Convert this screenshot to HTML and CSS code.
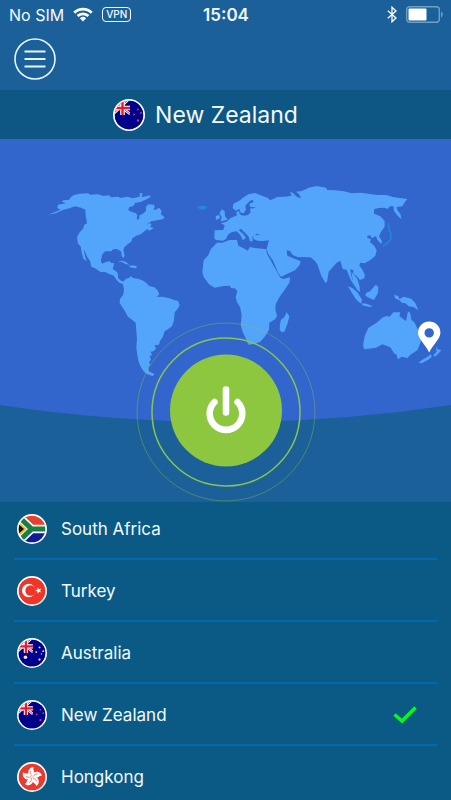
FILE: index.html
```html
<!DOCTYPE html>
<html lang="en">
<head>
<meta charset="utf-8">
<meta name="viewport" content="width=device-width, initial-scale=1">
<title>VPN</title>
<link rel="stylesheet" href="styles.css">
</head>
<body>
<svg class="defs" aria-hidden="true">
  <defs>
    <clipPath id="disc"><circle cx="16" cy="16" r="14.2"/></clipPath>
    <g id="jack">
      <path fill="#00008b" d="M0 0h32v32H0z"/>
      <path stroke="#fff" stroke-width="2.600" d="M-2 0 17 15M17-1-1 16"/>
      <path stroke="#e8232f" stroke-width="1" d="M-2 0 17 15M17-1-1 16"/>
      <path stroke="#fff" stroke-width="4.600" d="M9.500 0v16M0 9h17"/>
      <path stroke="#f0142d" stroke-width="2.400" d="M9.500 0v16M0 9h17"/>
      <path fill="#00008b" d="M17 0h15v32H0V16.500h17z"/>
    </g>
    <symbol id="nz" viewBox="0 0 32 32">
      <circle cx="16" cy="16" r="16" fill="#fff"/>
      <g clip-path="url(#disc)"><use href="#jack"/>
        <g fill="#c23a66"><circle cx="25" cy="10.500" r="1"/><circle cx="21" cy="15.500" r="1"/><circle cx="28" cy="14" r="1"/><circle cx="25" cy="21.500" r="1.200"/></g>
      </g>
    </symbol>
    <symbol id="au" viewBox="0 0 32 32">
      <circle cx="16" cy="16" r="16" fill="#fff"/>
      <g clip-path="url(#disc)"><use href="#jack"/>
        <g fill="#e8e8ff"><circle cx="9" cy="20.500" r="1.900"/><circle cx="24" cy="10" r="1"/><circle cx="20.500" cy="15" r="1"/><circle cx="28" cy="14" r="1"/><circle cx="26" cy="17" r=".7"/><circle cx="24" cy="23" r="1.200"/></g>
      </g>
    </symbol>
    <symbol id="tr" viewBox="0 0 32 32">
      <circle cx="16" cy="16" r="16" fill="#fff"/>
      <circle cx="16" cy="16" r="14.200" fill="#ee3528"/>
      <circle cx="12.500" cy="15.500" r="7.200" fill="#fff"/>
      <circle cx="14.500" cy="15.500" r="5.600" fill="#ee3528"/>
      <path fill="#fff" d="m19.500 15.500 2.400-.9.100-2.500 1.600 2 2.400-.7-1.400 2.100 1.400 2.100-2.400-.7-1.600 2-.1-2.500z"/>
    </symbol>
    <symbol id="za" viewBox="0 0 32 32">
      <circle cx="16" cy="16" r="16" fill="#fff"/>
      <g clip-path="url(#disc)">
        <path fill="#e8412f" d="M0 0h32v12H16L3 2z"/>
        <path fill="#0c1c9b" d="M3 30l13-10h16v12H0z"/>
        <path fill="none" stroke="#fff" stroke-width="9" d="M1 2 15.500 16 1 30M15 16h18"/>
        <path fill="none" stroke="#168045" stroke-width="5.500" d="M1 2 15.500 16 1 30M15 16h18"/>
        <path fill="#f5b531" d="M0 6.500 10.500 16 0 25.500z"/>
        <path fill="#111" d="M0 9.500 7.500 16 0 22.500z"/>
      </g>
    </symbol>
    <symbol id="hk" viewBox="0 0 32 32">
      <circle cx="16" cy="16" r="16" fill="#fff"/>
      <circle cx="16" cy="16" r="14.200" fill="#e93a30"/>
      <g transform="translate(-3.200 -3.200) scale(1.2)">
        <g fill="#fff">
          <path id="petal" d="M16 16c-3.500-1.300-4.200-4.600-2.400-7 1.100-1.500 2.700-1.900 4.100-1.600-1.200 1.400.2 2.600.2 4.600 0 1.800-1.200 2.600-1.900 4z"/>
          <use href="#petal" transform="rotate(72 16 16)"/><use href="#petal" transform="rotate(144 16 16)"/><use href="#petal" transform="rotate(216 16 16)"/><use href="#petal" transform="rotate(288 16 16)"/>
        </g>
        <g stroke="#e93a30" stroke-width=".5" fill="none">
          <path id="vein" d="M16 15c-1.500-1.500-1.600-3-.9-4.500"/>
          <use href="#vein" transform="rotate(72 16 16)"/><use href="#vein" transform="rotate(144 16 16)"/><use href="#vein" transform="rotate(216 16 16)"/><use href="#vein" transform="rotate(288 16 16)"/>
        </g>
      </g>
    </symbol>
  </defs>
</svg>

<div class="app">
  <div class="status">
    <div class="status-left">
      <span>No SIM</span>
      <svg class="wifi" viewBox="0 0 20 15" aria-hidden="true">
        <path fill="none" stroke="#fff" stroke-width="2.800" d="M1.300 5.700a12.400 12.400 0 0 1 17.400 0M4.600 9.100a7.700 7.700 0 0 1 10.800 0"/>
        <path fill="#fff" d="M10 14.500 6.900 11.300a4.500 4.500 0 0 1 6.200 0z"/>
      </svg>
      <span class="vpn">VPN</span>
    </div>
    <time class="clock">15:04</time>
    <div class="status-right">
      <svg class="bluetooth" viewBox="0 0 10 17" aria-hidden="true"><path fill="none" stroke="#fff" stroke-width="1.300" d="m.8 4.800 8.200 7.300-4 3.700V1.200l4 3.700-8.200 7.300"/></svg>
      <svg class="battery" viewBox="0 0 37 17" aria-hidden="true">
        <rect x=".7" y=".7" width="32.600" height="15.600" rx="3" fill="none" stroke="#6f9fc8" stroke-width="1.400"/>
        <rect x="2.500" y="2.500" width="18" height="12" rx="1" fill="#fff"/>
        <path fill="#6f9fc8" d="M35 5.500c2.300 1 2.300 5 0 6z"/>
      </svg>
    </div>
  </div>

  <header class="toolbar">
    <button class="menu" type="button" aria-label="Menu">
      <svg viewBox="0 0 42 42" aria-hidden="true"><g fill="none" stroke="#e6f5ff"><circle cx="21" cy="21" r="20" stroke-width="1.600"/><path stroke-width="2" d="M10.500 13.500h21M10.500 21h21M10.500 28.500h21"/></g></svg>
    </button>
  </header>

  <h1 class="current"><svg class="flag-large" aria-hidden="true"><use href="#nz"/></svg>New Zealand</h1>

  <main class="stage">
    <svg class="map" viewBox="0 139 451 363" aria-hidden="true">
      <path fill="#3366cc" d="M0 139h451v266Q225.500 439 0 405z"/>
      <g fill="#52a5fa">
        <!-- North and Central America -->
        <g transform="translate(40 175) scale(.33333)">
          <path d="M26 119 45 111 62 104 52 99 54 89 78 85 66 80 70 76 88 74 92 67 102 60 120 56 145 55 150 59 175 58 190 63 207 61 213 67 236 65 240 69 262 65 278 70 292 67 300 64 299 54 308 55 305 66 318 64 330 61 332 65 322 72 309 77 302 81 286 83 280 93 267 97 265 106 276 111 288 115 292 121 290 133 297 133 299 121 311 115 318 107 318 95 325 88 342 89 344 96 340 104 347 104 358 98 365 109 362 117 374 127 368 133 351 136 334 139 318 150 331 144 334 150 330 156 342 159 328 167 322 162 311 170 302 178 287 183 276 191 275 199 263 208 253 217 250 224 254 242 250 249 245 243 244 230 238 226 228 221 217 224 215 229 196 229 187 238 183 254 184 271 193 279 203 277 210 266 222 263 221 273 216 286 231 290 234 309 244 318 257 320 250 327 239 323 230 315 224 302 207 297 194 290 183 292 165 280 154 275 150 257 142 247 133 226 131 224 136 246 140 259 130 251 125 233 122 214 114 206 111 187 118 173 129 161 133 149 141 145 137 122 136 104 123 98 105 94 88 100 68 105 47 115z"/>
          <path d="m232 259 14-2 12 4 10 8-12-2-10-6zM267 272l14-1 11 4-5 5-17-3z"/>
        </g>
        <!-- South America -->
        <g transform="translate(100 260) scale(.33333)">
          <path d="M0 0 6 11 18 6 28 4 38 12 36 24 45 32 53 39 53 53 63 66 69 67 77 57 88 53 92 48 99 54 117 57 131 63 140 70 147 78 163 82 173 91 178 103 170 111 187 110 205 114 222 120 234 123 239 135 232 148 224 157 222 181 216 199 206 206 194 214 188 232 180 243 177 254 164 256 168 266 161 274 152 275 156 285 149 289 153 300 147 306 150 315 144 324 147 334 164 343 158 348 142 343 132 335 123 322 116 305 112 285 109 264 111 236 107 188 97 180 84 170 73 151 59 129 60 116 70 104 72 86 68 70 60 69 48 57 39 44 24 35 7 32 0 36z"/>
        </g>
        <!-- Africa and Madagascar -->
        <g transform="translate(195 235) scale(.33333)">
          <path d="M66 23 82 23 103 15 126 15 130 32 146 40 158 47 165 36 179 39 202 41 214 43 215 54 230 82 239 98 256 128 265 132 286 127 283 143 269 164 253 187 242 208 241 223 246 243 240 253 223 263 222 284 211 303 196 320 181 326 160 329 152 310 143 291 137 270 140 242 136 218 126 201 122 187 127 168 119 160 109 160 104 152 85 153 59 158 42 148 26 126 22 112 26 76 40 61 47 43z"/>
          <path d="m275 232 8 12-5 21-10 25-9 1-5-8 1-16 3-13 10-7z"/>
        </g>
        <!-- Europe, Asia and Arabia -->
        <g transform="translate(190 175) scale(.33333)">
          <path d="M74 166 100 165 104 151 92 145 110 140 121 130 141 121 139 111 147 108 149 118 160 122 174 120 182 112 180 101 199 98 180 95 178 87 191 80 188 75 180 77 166 92 168 104 161 115 152 113 148 102 137 107 128 99 130 86 148 77 159 68 175 58 195 54 210 60 232 68 241 76 262 66 285 65 305 62 300 50 309 54 322 67 334 69 326 56 318 50 336 48 356 38 380 33 408 38 412 45 435 46 462 49 485 55 513 53 540 57 562 60 588 60 612 67 652 72 645 80 637 94 620 96 622 104 632 119 634 133 621 120 612 108 610 93 600 94 592 102 584 98 566 99 552 103 552 116 570 123 584 138 584 155 573 170 567 184 576 199 573 207 562 194 558 183 545 190 542 181 532 183 532 189 543 193 540 201 553 213 560 226 556 242 541 255 524 265 511 263 508 272 516 282 525 300 523 310 510 315 500 303 490 298 490 286 481 283 483 300 488 315 497 325 494 332 484 318 477 302 470 284 458 282 451 257 440 263 427 278 416 290 411 321 406 323 394 302 382 268 374 257 362 247 322 246 308 240 300 228 290 226 292 242 310 250 332 259 329 270 315 286 273 305 264 293 250 259 234 235 230 221 237 196 220 198 203 197 190 192 190 181 212 180 201 176 187 185 188 199 180 199 176 185 165 173 153 161 146 165 160 178 168 188 159 196 150 179 140 169 126 171 115 178 108 192 99 197 78 195 73 190z"/>
          <path d="m96 103 8 6 1 14 8 11-21 5 3-14-7-10zM77 123l11-3 2 9-12 6z"/>
        </g>
        <!-- Indonesia, New Guinea, Australia and New Zealand -->
        <g transform="translate(320 260) scale(.33333)">
          <path d="m94 35 9 11 9 10 7 25 1 15-9-7-9-16-5-19zM84 79l13 5 15 13 14 22-3 12-14-12-15-23zM126 130l14 1 18 8-8 2-23-5zM139 98l11-4 17-20 8 7-1 18-12 21-14-6-12-7zM223 104l11 4 5 9 12-7 22 6 13 13 9 22-15-10-14-2-9-9-12-2-6-7-14-6z"/>
          <path d="m145 204 25-16 17-15 12-5 10 2 11-13 21 0-3 12 20 14 6-29 7 6 3 19 10 9 10 22 9 13-1 24-10 24-22 14-7 9-29-6-13-10-10-16-24-9-19 10-35 5-4-11 5-28zM230 287l16-5-2 9-10 7zM348 258l5 10 11 2-9 11-10 9-5-4 10-11zM333 283l-11 8-16 9-10 8 9 2 20-11 10-8z"/>
        </g>
      </g>
      <!-- Iceland and Japan -->
      <path fill="#2888df" d="m198 206.500 5-.8 4 .8-2 3-5-.3-2-1.200z"/>
      <path fill="none" stroke="#2484dc" stroke-width="1.800" stroke-linejoin="round" d="m388.300 223 .7 7 2 4-.5 6-3 3-4.500 3"/>
      <path fill="#fff" fill-rule="evenodd" d="M429.200 352.500c-4-8.500-11.200-13-11.200-19.900a11.200 11.200 0 0 1 22.400 0c0 6.900-7.200 11.400-11.200 19.900zM429.200 328.200a4.700 4.700 0 1 0 0 9.400 4.700 4.700 0 0 0 0-9.400z"/>
    </svg>
    <button class="power" type="button" aria-label="Disconnect">
      <svg viewBox="0 0 180 180" aria-hidden="true">
        <circle cx="90" cy="90" r="89" fill="none" stroke="#8dc63f" stroke-opacity=".4"/>
        <circle cx="90" cy="90" r="74" fill="none" stroke="#86c552" stroke-width="1.500"/>
        <circle cx="90" cy="88.500" r="56" fill="#8dc63f"/>
        <g fill="none" stroke="#fff" stroke-width="6.600" stroke-linecap="round"><path d="M90 67.500v23"/><path d="M78.500 80a16.300 16.300 0 1 0 23 0"/></g>
      </svg>
    </button>
  </main>

  <ul class="countries">
    <li><button type="button"><svg class="flag" aria-hidden="true"><use href="#za"/></svg><span>South Africa</span></button></li>
    <li><button type="button"><svg class="flag" aria-hidden="true"><use href="#tr"/></svg><span>Turkey</span></button></li>
    <li><button type="button"><svg class="flag" aria-hidden="true"><use href="#au"/></svg><span>Australia</span></button></li>
    <li><button type="button" aria-pressed="true"><svg class="flag" aria-hidden="true"><use href="#nz"/></svg><span>New Zealand</span><svg class="check" viewBox="0 0 24 18" aria-hidden="true"><path fill="none" stroke="#0bf51e" stroke-width="3.500" d="m1.500 8.500 7.500 6.500L22.500 1.500"/></svg></button></li>
    <li><button type="button"><svg class="flag" aria-hidden="true"><use href="#hk"/></svg><span>Hongkong</span></button></li>
  </ul>
</div>
</body>
</html>
```
FILE: styles.css
```css
* { box-sizing: border-box; }

body {
  margin: 0;
  background: #0a5a85;
  color: #f2faff;
  font-family: Inter, "Liberation Sans", sans-serif;
}

svg { display: block; }

.defs { position: absolute; width: 0; height: 0; }

button {
  padding: 0;
  border: 0;
  background: none;
  color: inherit;
  font: inherit;
  cursor: pointer;
}

.app {
  display: flex;
  flex-direction: column;
  height: 100vh;
  background: #1b6099;
}

.app > * { flex-shrink: 0; }

.status {
  display: grid;
  grid-template-columns: 1fr auto 1fr;
  align-items: center;
  height: 30px;
  padding: 0 8px 1px 9px;
  font-size: 16px;
}

.status-left,
.status-right {
  display: flex;
  align-items: center;
  gap: 9px;
}

.status-right { justify-content: flex-end; }

.clock { font-size: 17px; font-weight: 600; }

.wifi { width: 20px; height: 15px; }

.vpn {
  padding: 0 3px;
  border: 1px solid #fff;
  border-radius: 4px;
  font-size: 10px;
  font-weight: 500;
  line-height: 13px;
}

.bluetooth { width: 10px; height: 17px; }
.battery { width: 37px; height: 17px; }

.toolbar {
  height: 60px;
  padding: 8px 14px;
}

.menu, .menu svg { display: block; width: 42px; height: 42px; }

.current {
  display: flex;
  align-items: center;
  justify-content: center;
  gap: 10px;
  height: 49px;
  margin: 0;
  padding-right: 40px;
  background: #0e5784;
  font-size: 23px;
  font-weight: 400;
}

.flag-large { width: 32px; height: 32px; }

.stage { display: grid; }

.map, .power { grid-area: 1 / 1; }

.map { width: 100%; height: auto; }

.power {
  align-self: end;
  justify-self: center;
  border-radius: 50%;
}

.power svg { width: 180px; height: 180px; }

.app > .countries {
  flex: 1 1 0;
  min-height: 0;
  margin: 0;
  padding: 0 14px;
  overflow-y: auto;
  scrollbar-width: none;
  background: #0a5a85;
  list-style: none;
}

.countries li { border-bottom: 2px solid #0468ac; }

.countries button {
  display: flex;
  align-items: center;
  gap: 14px;
  width: 100%;
  padding: 16px 20px 14px 3px;
  font-size: 17px;
  line-height: 20px;
  text-align: left;
}

.countries li:first-child button { padding-top: 12px; }

.flag { width: 30px; height: 30px; }

.check { width: 24px; height: 18px; margin-left: auto; }
```
